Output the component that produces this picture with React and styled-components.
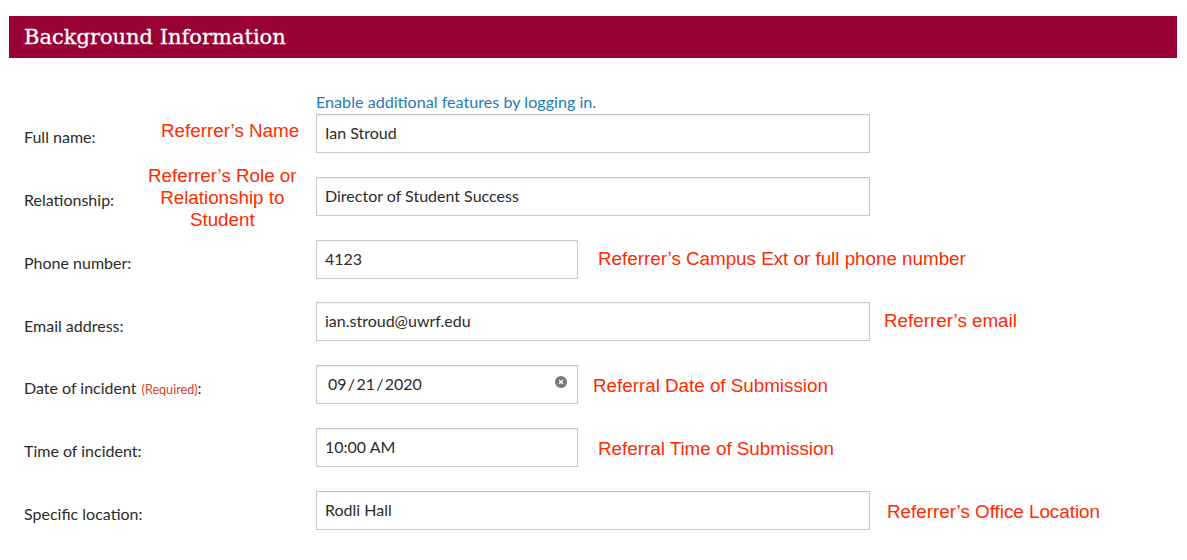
import styled, { createGlobalStyle } from "styled-components";

const GlobalStyle = createGlobalStyle`
  body {
    margin: 0;
    background: #fff;
    font-family: "Lato", "Noto Sans", sans-serif;
    color: #2b2b2b;
  }
`;

const Page = styled.div`
  width: 1187px;
  height: 560px;
  padding: 16px 10px 0 9px;
  box-sizing: border-box;
  overflow: hidden;
`;

const SectionHeader = styled.h2`
  margin: 0;
  height: 42px;
  padding-left: 15px;
  background: #990033;
  color: #fff;
  font-family: "DejaVu Serif", "Liberation Serif", serif;
  font-size: 21px;
  font-weight: 400;
  line-height: 42px;
  -webkit-text-stroke: 0.3px #fff;
`;

const Form = styled.div`
  padding: 33px 0 0 15px;
`;

const LoginHint = styled.div`
  margin-left: 292px;
  height: 23px;
  color: #1f7ab8;
  font-size: 16.15px;
  line-height: 21px;
`;

const Rows = styled.div`
  display: flex;
  flex-direction: column;
  gap: 23.8px;
`;

const Row = styled.div`
  display: flex;
  align-items: center;
  height: 39px;
`;

const LabelCell = styled.div`
  display: flex;
  align-items: center;
  flex: none;
  width: 292px;
`;

const Label = styled.label`
  flex: none;
  width: 137px;
  padding-top: 6.5px;
  font-size: 16px;
  white-space: nowrap;
`;

const Required = styled.span`
  margin-left: 5px;
  color: #d9402c;
  font-size: 12.6px;
`;

const Note = styled.div`
  flex: none;
  color: #ff2a00;
  font-family: "Liberation Sans", Arial, sans-serif;
  font-size: 18.8px;
  line-height: 22px;
  text-align: center;
  white-space: pre-line;
  margin-left: ${(p) => p.$left || 0}px;
  margin-top: ${(p) => p.$top || 0}px;
`;

const Field = styled.div`
  display: flex;
  align-items: center;
  justify-content: space-between;
  flex: none;
  box-sizing: border-box;
  width: ${(p) => (p.$short ? 262 : 554)}px;
  height: 39px;
  padding: 0 10px 2px 8px;
  border: 1px solid #c8c8c8;
  box-shadow: inset 0 1px 2px rgba(0, 0, 0, 0.06);
  font-size: 16px;
`;

const DateValue = styled.span`
  margin-left: 3px;
  font-size: 16px;
  word-spacing: -2.8px;
`;

const ClearIcon = styled.svg`
  width: 12px;
  height: 12px;
  margin-bottom: 3px;
`;

const rows = [
  { label: "Full name:", value: "Ian Stroud", leftNote: "Referrer’s Name", leftOffset: 0, leftTop: -6 },
  {
    label: "Relationship:",
    value: "Director of Student Success",
    leftNote: "Referrer’s Role or\nRelationship to\nStudent",
    leftOffset: -13,
    leftTop: 3,
  },
  { label: "Phone number:", value: "4123", short: true, rightNote: "Referrer’s Campus Ext or full phone number", rightOffset: 20, rightTop: 0 },
  { label: "Email address:", value: "ian.stroud@uwrf.edu", rightNote: "Referrer’s email", rightOffset: 14, rightTop: -2 },
  { label: "Date of incident", required: true, date: "09 / 21 / 2020", short: true, rightNote: "Referral Date of Submission", rightOffset: 15, rightTop: 2 },
  { label: "Time of incident:", value: "10:00 AM", short: true, rightNote: "Referral Time of Submission", rightOffset: 20, rightTop: 4 },
  { label: "Specific location:", value: "Rodli Hall", rightNote: "Referrer’s Office Location", rightOffset: 17, rightTop: 4 },
];

function App() {
  return (
    <Page>
      <GlobalStyle />
      <SectionHeader>Background Information</SectionHeader>
      <Form>
        <LoginHint>Enable additional features by logging in.</LoginHint>
        <Rows>
          {rows.map((row) => (
            <Row key={row.label}>
              <LabelCell>
                <Label>
                  {row.label}
                  {row.required && (
                    <>
                      <Required>(Required)</Required>:
                    </>
                  )}
                </Label>
                {row.leftNote && (
                  <Note $left={row.leftOffset} $top={row.leftTop}>
                    {row.leftNote}
                  </Note>
                )}
              </LabelCell>
              <Field $short={row.short}>
                {row.date ? <DateValue>{row.date}</DateValue> : row.value}
                {row.date && (
                  <ClearIcon viewBox="0 0 12 12">
                    <circle cx="6" cy="6" r="6" fill="#777" />
                    <path d="M4 4l4 4M8 4l-4 4" stroke="#fff" strokeWidth="1.4" />
                  </ClearIcon>
                )}
              </Field>
              {row.rightNote && (
                <Note $left={row.rightOffset} $top={row.rightTop}>
                  {row.rightNote}
                </Note>
              )}
            </Row>
          ))}
        </Rows>
      </Form>
    </Page>
  );
}

export default App;
